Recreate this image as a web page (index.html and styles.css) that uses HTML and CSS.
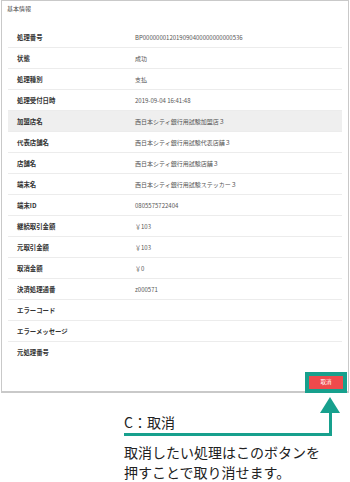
FILE: index.html
```html
<!DOCTYPE html>
<html lang="ja">
<head>
<meta charset="utf-8">
<title>基本情報</title>
<link rel="stylesheet" href="styles.css">
</head>
<body>
<div class="screen">
  <div class="title">基本情報</div>
  <div class="table">
    <div class="row"><div class="label">処理番号</div><div class="value">BP000000012019090400000000000536</div></div>
    <div class="row"><div class="label">状態</div><div class="value">成功</div></div>
    <div class="row"><div class="label">処理種別</div><div class="value">支払</div></div>
    <div class="row"><div class="label">処理受付日時</div><div class="value">2019-09-04 16:41:48</div></div>
    <div class="row shade"><div class="label">加盟店名</div><div class="value">西日本シティ銀行用試験加盟店３</div></div>
    <div class="row"><div class="label">代表店舗名</div><div class="value">西日本シティ銀行用試験代表店舗３</div></div>
    <div class="row"><div class="label">店舗名</div><div class="value">西日本シティ銀行用試験店舗３</div></div>
    <div class="row"><div class="label">端末名</div><div class="value">西日本シティ銀行用試験ステッカー３</div></div>
    <div class="row"><div class="label">端末ID</div><div class="value">0805575722404</div></div>
    <div class="row"><div class="label">継続取引金額</div><div class="value">￥103</div></div>
    <div class="row"><div class="label">元取引金額</div><div class="value">￥103</div></div>
    <div class="row"><div class="label">取消金額</div><div class="value">￥0</div></div>
    <div class="row"><div class="label">決済処理通番</div><div class="value">z000571</div></div>
    <div class="row"><div class="label">エラーコード</div><div class="value"></div></div>
    <div class="row"><div class="label">エラーメッセージ</div><div class="value"></div></div>
    <div class="row last"><div class="label">元処理番号</div><div class="value"></div></div>
  </div>
  <div class="footer">
    <button class="cancel">取消</button>
  </div>
</div>
<div class="note">
  <div class="note-title">C：取消</div>
  <p class="note-text">取消したい処理はこのボタンを<br>押すことで取り消せます。</p>
</div>
</body>
</html>
```

FILE: styles.css
```css
html, body {
  margin: 0;
  padding: 0;
  background: #ffffff;
}
body {
  font-family: "Noto Sans CJK JP", "Noto Sans", sans-serif;
  width: 350px;
  height: 482px;
  overflow: hidden;
  position: relative;
}
.screen {
  margin-left: 1px;
  width: 346px;
  height: 390px;
  border: 1px solid #c9c9c9;
  border-width: 1px 1px 2px 1px;
  background: #ffffff;
  position: relative;
}
.title {
  height: 26px;
  box-sizing: border-box;
  padding: 4px 0 0 5px;
  font-size: 6px;
  line-height: 8px;
  color: #444;
}
.table {
  margin: 0 6px;
}
.row {
  display: grid;
  grid-template-columns: 127px 1fr;
  align-items: center;
  height: 21px;
  box-sizing: border-box;
  border-bottom: 1px solid #ececec;
}
.row.shade {
  background: #efefef;
}
.row.last {
  border-bottom: none;
}
.label {
  padding-left: 9px;
  font-size: 6.4px;
  font-weight: 700;
  color: #333;
}
.value {
  font-size: 6px;
  color: #555;
}
.footer {
  display: flex;
  justify-content: flex-end;
  padding: 13px 5px 0 0;
}
.cancel {
  width: 34px;
  height: 13px;
  padding: 0;
  border: none;
  background: #ef4a4c;
  color: #fff;
  font-family: inherit;
  font-size: 5.5px;
  line-height: 13px;
  outline: 4px solid #17a08d;
}
.note {
  margin: 19px 0 0 124px;
  color: #222;
}
.note-title {
  position: relative;
  width: 205px;
  height: 21px;
  font-size: 14px;
  line-height: 21px;
  border-bottom: 3px solid #17a08d;
  border-right: 3px solid #17a08d;
}
.note-title::before {
  content: "";
  position: absolute;
  right: -11px;
  top: -15px;
  border-left: 10px solid transparent;
  border-right: 10px solid transparent;
  border-bottom: 16px solid #17a08d;
}
.note-text {
  margin: 6px 0 0 0;
  font-size: 14px;
  line-height: 20px;
}
```
